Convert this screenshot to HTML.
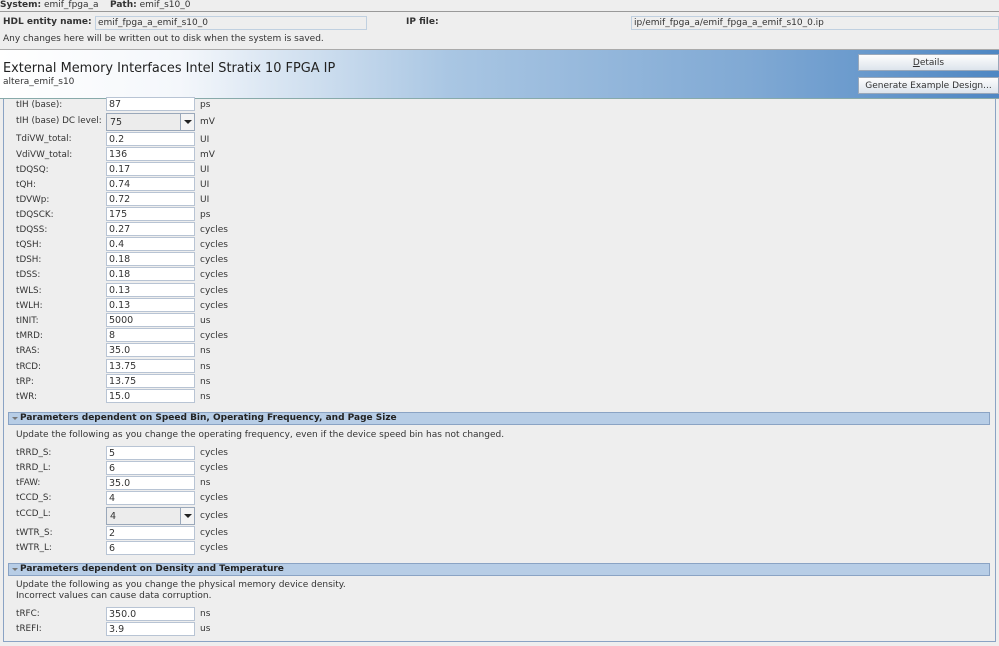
<!DOCTYPE html>
<html><head><meta charset="utf-8"><style>
*{margin:0;padding:0;box-sizing:border-box}
body{width:999px;height:646px;overflow:hidden;background:#eeeeee;font-family:"DejaVu Sans","Liberation Sans",sans-serif;font-size:9px;color:#333;position:relative}
.a{position:absolute;white-space:nowrap}
.l{position:absolute;left:16px;font-size:8.8px;color:#333;line-height:11px;margin-top:2px}
.i{position:absolute;left:106px;width:89px;height:14px;background:#fff;border:1px solid #b8c4d4;font-size:9.5px;line-height:13px;padding-left:2px;color:#333}
.c{position:absolute;left:106px;width:89px;height:18px;background:#ececec;border:1px solid #9aa8ba;font-size:9.5px;line-height:17px;padding-left:3px}
.c b{position:absolute;right:0;top:0;width:14px;height:16px;border-left:1px solid #9aa8ba;background:#f4f4f4}
.c b:after{content:"";position:absolute;left:3px;top:6px;border-left:4px solid transparent;border-right:4px solid transparent;border-top:4px solid #222}
.u{position:absolute;left:200px;font-size:9px;line-height:11px;margin-top:1px}
.h{position:absolute;left:8px;width:982px;height:13px;background:#b7cde6;border:1px solid #8aa3c4;font-weight:bold;font-size:9px;line-height:11px;padding-left:11px;color:#222}
.h:before{content:"";position:absolute;left:3px;top:4px;border-left:3px solid transparent;border-right:3px solid transparent;border-top:3px solid #777}
.btn{position:absolute;left:858px;width:141px;height:17px;background:linear-gradient(#fdfdfd,#dde4ec);border:1px solid #9aa8ba;text-align:center;font-size:9px;line-height:16px;color:#333}
</style></head><body>
<div class="a" style="left:0;top:0;font-size:9px"><b>System:</b> emif_fpga_a &nbsp;&nbsp;&nbsp;<b>Path:</b> emif_s10_0</div>
<div class="a" style="left:0;top:11px;width:999px;height:1px;background:#999"></div>
<div class="a" style="left:3px;top:17px;font-size:9px;font-weight:bold">HDL entity name:</div>
<div class="a" style="left:95px;top:16px;width:272px;height:14px;border:1px solid #c0d0e0;background:#eee;font-size:9px;padding-left:2px;line-height:13px">emif_fpga_a_emif_s10_0</div>
<div class="a" style="left:406px;top:17px;font-size:9px;font-weight:bold">IP file:</div>
<div class="a" style="left:631px;top:16px;width:368px;height:14px;border:1px solid #c0d0e0;background:#eee;font-size:9px;padding-left:2px;line-height:13px">ip/emif_fpga_a/emif_fpga_a_emif_s10_0.ip</div>
<div class="a" style="left:3px;top:34px;font-size:9px">Any changes here will be written out to disk when the system is saved.</div>
<div class="a" style="left:0;top:49px;width:999px;height:50px;background:linear-gradient(90deg,#ffffff 0%,#f4f7fb 18%,#a9c6e3 45%,#80a9d4 75%,#4f87c3 100%);border-top:1px solid #aaa;border-bottom:1px solid #8aa"></div>
<div class="a" style="left:3px;top:61px;font-size:12.9px;color:#222">External Memory Interfaces Intel Stratix 10 FPGA IP</div>
<div class="a" style="left:3px;top:77px;font-size:9px">altera_emif_s10</div>
<div class="btn" style="top:54px"><u>D</u>etails</div>
<div class="btn" style="top:77px">Generate Example Design...</div>
<div class="a" style="left:3px;top:99px;width:993px;height:543px;border-left:1px solid #8aa3c4;border-right:1px solid #8aa3c4;border-bottom:1px solid #8aa3c4"></div>

<div class="l" style="top:98px">tIH (base):</div><div class="i" style="top:97px">87</div><div class="u" style="top:99px">ps</div>
<div class="l" style="top:114px">tIH (base) DC level:</div><div class="c" style="top:113px">75<b></b></div><div class="u" style="top:116px">mV</div>
<div class="l" style="top:132px">TdiVW_total:</div><div class="i" style="top:132px">0.2</div><div class="u" style="top:134px">UI</div>
<div class="l" style="top:148px">VdiVW_total:</div><div class="i" style="top:147px">136</div><div class="u" style="top:149px">mV</div>
<div class="l" style="top:163px">tDQSQ:</div><div class="i" style="top:162px">0.17</div><div class="u" style="top:164px">UI</div>
<div class="l" style="top:178px">tQH:</div><div class="i" style="top:177px">0.74</div><div class="u" style="top:179px">UI</div>
<div class="l" style="top:193px">tDVWp:</div><div class="i" style="top:192px">0.72</div><div class="u" style="top:194px">UI</div>
<div class="l" style="top:208px">tDQSCK:</div><div class="i" style="top:207px">175</div><div class="u" style="top:209px">ps</div>
<div class="l" style="top:223px">tDQSS:</div><div class="i" style="top:222px">0.27</div><div class="u" style="top:224px">cycles</div>
<div class="l" style="top:238px">tQSH:</div><div class="i" style="top:237px">0.4</div><div class="u" style="top:239px">cycles</div>
<div class="l" style="top:253px">tDSH:</div><div class="i" style="top:252px">0.18</div><div class="u" style="top:254px">cycles</div>
<div class="l" style="top:268px">tDSS:</div><div class="i" style="top:267px">0.18</div><div class="u" style="top:269px">cycles</div>
<div class="l" style="top:284px">tWLS:</div><div class="i" style="top:283px">0.13</div><div class="u" style="top:285px">cycles</div>
<div class="l" style="top:299px">tWLH:</div><div class="i" style="top:298px">0.13</div><div class="u" style="top:300px">cycles</div>
<div class="l" style="top:314px">tINIT:</div><div class="i" style="top:313px">5000</div><div class="u" style="top:315px">us</div>
<div class="l" style="top:329px">tMRD:</div><div class="i" style="top:328px">8</div><div class="u" style="top:330px">cycles</div>
<div class="l" style="top:344px">tRAS:</div><div class="i" style="top:343px">35.0</div><div class="u" style="top:345px">ns</div>
<div class="l" style="top:360px">tRCD:</div><div class="i" style="top:359px">13.75</div><div class="u" style="top:361px">ns</div>
<div class="l" style="top:375px">tRP:</div><div class="i" style="top:374px">13.75</div><div class="u" style="top:376px">ns</div>
<div class="l" style="top:390px">tWR:</div><div class="i" style="top:389px">15.0</div><div class="u" style="top:391px">ns</div>

<div class="h" style="top:412px">Parameters dependent on Speed Bin, Operating Frequency, and Page Size</div>
<div class="a" style="left:16px;top:430px;font-size:9px">Update the following as you change the operating frequency, even if the device speed bin has not changed.</div>
<div class="l" style="top:446px">tRRD_S:</div><div class="i" style="top:446px">5</div><div class="u" style="top:447px">cycles</div>
<div class="l" style="top:461px">tRRD_L:</div><div class="i" style="top:461px">6</div><div class="u" style="top:462px">cycles</div>
<div class="l" style="top:476px">tFAW:</div><div class="i" style="top:476px">35.0</div><div class="u" style="top:477px">ns</div>
<div class="l" style="top:491px">tCCD_S:</div><div class="i" style="top:491px">4</div><div class="u" style="top:492px">cycles</div>
<div class="l" style="top:507px">tCCD_L:</div><div class="c" style="top:507px">4<b></b></div><div class="u" style="top:510px">cycles</div>
<div class="l" style="top:526px">tWTR_S:</div><div class="i" style="top:526px">2</div><div class="u" style="top:527px">cycles</div>
<div class="l" style="top:541px">tWTR_L:</div><div class="i" style="top:541px">6</div><div class="u" style="top:542px">cycles</div>

<div class="h" style="top:563px">Parameters dependent on Density and Temperature</div>
<div class="a" style="left:16px;top:580px;font-size:9px">Update the following as you change the physical memory device density.</div>
<div class="a" style="left:16px;top:591px;font-size:9px">Incorrect values can cause data corruption.</div>
<div class="l" style="top:607px">tRFC:</div><div class="i" style="top:607px">350.0</div><div class="u" style="top:608px">ns</div>
<div class="l" style="top:622px">tREFI:</div><div class="i" style="top:622px">3.9</div><div class="u" style="top:623px">us</div>
</body></html>
